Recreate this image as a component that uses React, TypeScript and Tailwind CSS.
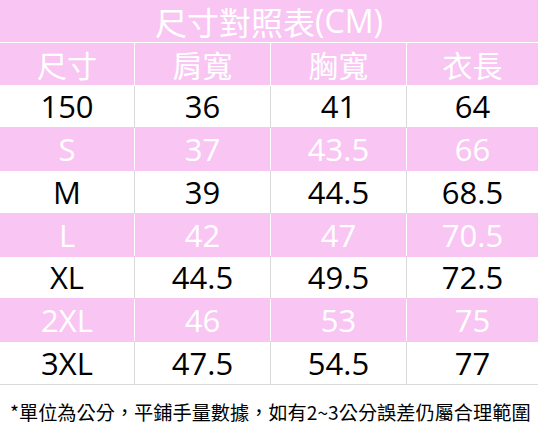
import React from "react";

const rows: string[][] = [
  ["150", "36", "41", "64"],
  ["S", "37", "43.5", "66"],
  ["M", "39", "44.5", "68.5"],
  ["L", "42", "47", "70.5"],
  ["XL", "44.5", "49.5", "72.5"],
  ["2XL", "46", "53", "75"],
  ["3XL", "47.5", "54.5", "77"],
];

const widths = ["w-[135px]", "w-[136px]", "w-[136px]", "flex-1"];

export default function App() {
  return (
    <div className="w-[538px] h-[442px] bg-white overflow-hidden font-['Open_Sans','Noto_Sans_CJK_TC',sans-serif]">
      <div className="h-[42.75px] bg-[#f9c6f3] border-b border-white flex items-center justify-center text-white text-[32px] leading-[40px]">
        <span className="font-['Noto_Sans_CJK_TC',sans-serif]">尺寸對照表</span>
        <span className="font-['Open_Sans',sans-serif]">(CM)</span>
      </div>
      <div className="h-[42.75px] bg-[#f9c6f3] border-b border-white flex text-white text-[30px] leading-[40px] font-['Noto_Sans_CJK_TC',sans-serif]">
        {["尺寸", "肩寬", "胸寬", "衣長"].map((t, i) => (
          <div
            key={t}
            className={`${widths[i]} flex items-center justify-center ${i < 3 ? "border-r border-white" : ""}`}
          >
            {t}
          </div>
        ))}
      </div>
      {rows.map((r, ri) => {
        const pink = ri % 2 === 1;
        const last = ri === rows.length - 1;
        return (
          <div
            key={ri}
            className={`h-[42.75px] flex text-[31px] leading-[40px] border-b ${
              pink ? "bg-[#f9c6f3] text-white" : "bg-white text-black"
            } ${last ? "border-[#d9d9d9]" : "border-[#f9c6f3]"}`}
          >
            {r.map((c, ci) => (
              <div
                key={ci}
                className={`${widths[ci]} flex items-center justify-center ${
                  ci < 3 ? (pink ? "border-r border-white" : "border-r border-[#d9d9d9]") : ""
                }`}
              >
                {c}
              </div>
            ))}
          </div>
        );
      })}
      <div className="pl-[10px] pt-[15px] text-[19.2px] leading-[24px] text-black whitespace-nowrap font-['Noto_Sans_CJK_TC',sans-serif]">
        *單位為公分，平鋪手量數據，如有2~3公分誤差仍屬合理範圍
      </div>
    </div>
  );
}
